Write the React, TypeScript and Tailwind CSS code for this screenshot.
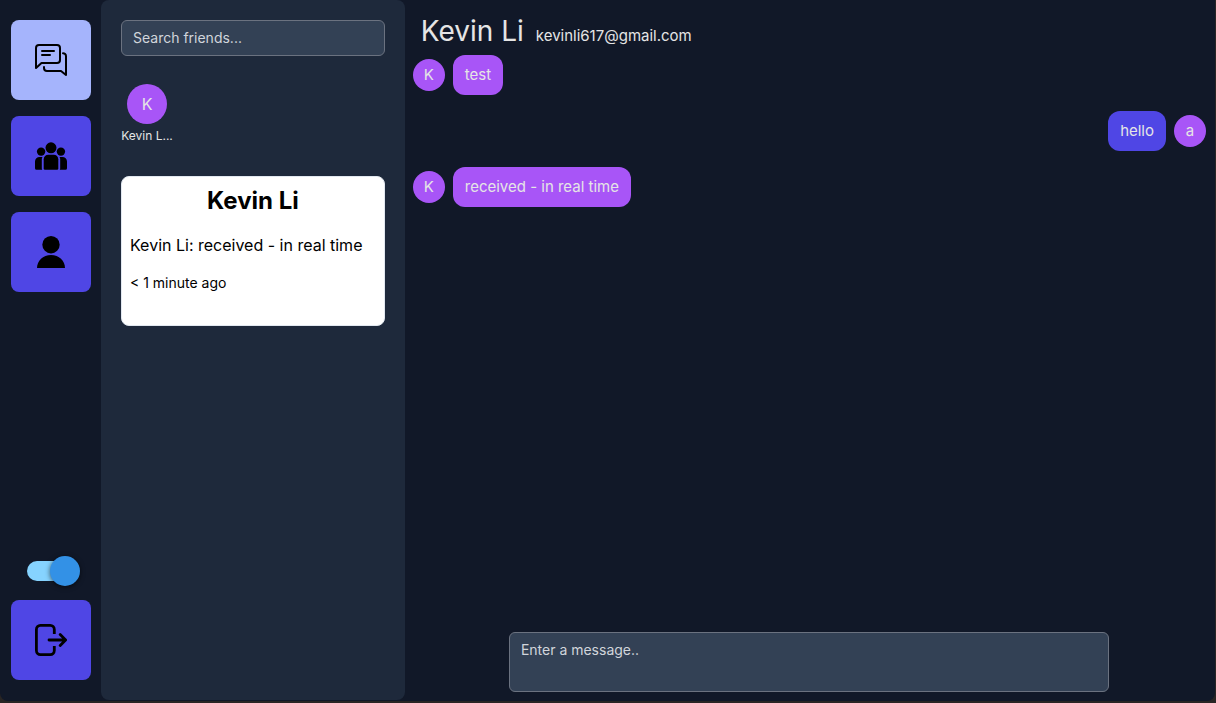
import { useState } from "react";
import type { ReactNode } from "react";

type Message = { id: number; from: string; text: string; mine: boolean };

const messages: Message[] = [
  { id: 1, from: "K", text: "test", mine: false },
  { id: 2, from: "a", text: "hello", mine: true },
  { id: 3, from: "K", text: "received - in real time", mine: false },
];

function ChatIcon() {
  return (
    <svg viewBox="0 0 32 32" className="size-8" fill="none" stroke="currentColor" strokeWidth="2" strokeLinecap="round" strokeLinejoin="round" aria-hidden="true">
      <path d="M1 24V4a3 3 0 0 1 3-3h18a3 3 0 0 1 3 3v12a3 3 0 0 1-3 3H6.5z" />
      <path d="M7 7h12M7 11h8" />
      <path d="M28 9.2a3 3 0 0 1 3 3V31l-5-4H12a3 3 0 0 1-3-3v-1" />
    </svg>
  );
}

function GroupIcon() {
  return (
    <svg viewBox="0 0 32 32" className="size-8" fill="currentColor" aria-hidden="true">
      <circle cx="16" cy="7.8" r="5.5" />
      <circle cx="6.1" cy="11.6" r="4.2" />
      <circle cx="25.9" cy="11.6" r="4.2" />
      <path d="M8.7 19.2a4.5 4.5 0 0 1 4.5-4.5h5.6a4.5 4.5 0 0 1 4.5 4.5v9.3a1.3 1.3 0 0 1-1.3 1.3H10a1.3 1.3 0 0 1-1.3-1.3z" />
      <path d="M7.5 17H4.6A4.6 4.6 0 0 0 0 21.6v6.6a1.6 1.6 0 0 0 1.6 1.6h5.6q-.4-.7-.4-1.6v-9q0-1.2.7-2.2z" />
      <path d="M24.5 17h2.9a4.6 4.6 0 0 1 4.6 4.6v6.6a1.6 1.6 0 0 1-1.6 1.6h-5.6q.4-.7.4-1.6v-9q0-1.2-.7-2.2z" />
    </svg>
  );
}

function PersonIcon() {
  return (
    <svg viewBox="0 0 32 32" className="size-8" fill="currentColor" aria-hidden="true">
      <circle cx="16" cy="8.7" r="8.7" />
      <path d="M2 32C2 24.5 8 18.9 16 18.9S30 24.5 30 32z" />
    </svg>
  );
}

function LogoutIcon() {
  return (
    <svg viewBox="0 0 32 32" className="size-8" fill="none" stroke="currentColor" strokeWidth="2.8" strokeLinejoin="round" aria-hidden="true">
      <path d="M19.3 10V5.4a4 4 0 0 0-4-4H5.4a4 4 0 0 0-4 4v21.2a4 4 0 0 0 4 4h9.9a4 4 0 0 0 4-4V22" />
      <path d="M14 16h16.5M25.2 10.5 30.6 16l-5.4 5.5" strokeLinecap="round" />
    </svg>
  );
}

function NavButton({ label, active, children }: { label: string; active?: boolean; children: ReactNode }) {
  return (
    <button
      type="button"
      aria-label={label}
      className={`flex size-20 items-center justify-center rounded-lg text-black ${active ? "bg-[#a5b4fc]" : "bg-[#4f46e5]"}`}
    >
      {children}
    </button>
  );
}

function ThemeSwitch() {
  const [on, setOn] = useState(true);
  return (
    <label className="relative mb-3.5 ml-4 flex h-[30px] w-[50px] cursor-pointer items-center">
      <input
        type="checkbox"
        aria-label="Dark mode"
        checked={on}
        onChange={(e) => setOn(e.target.checked)}
        className="peer sr-only"
      />
      <span className="h-5 w-full rounded-full bg-slate-500 peer-checked:bg-[#86d3ff]" />
      <span className="absolute top-0 left-0 size-[30px] rounded-full bg-[#3391e6] shadow-[0_1px_5px_rgba(0,0,0,0.6)] peer-checked:left-[23px]" />
    </label>
  );
}

function MessageRow({ message }: { message: Message }) {
  return (
    <li className={`flex items-center gap-2 ${message.mine ? "flex-row-reverse" : ""}`}>
      <span className="flex size-8 shrink-0 items-center justify-center rounded-full bg-[#a855f7]">{message.from}</span>
      <p className={`rounded-xl px-3 py-2 ${message.mine ? "bg-[#4f46e5]" : "bg-[#a855f7]"}`}>{message.text}</p>
    </li>
  );
}

export default function App() {
  return (
    <div className="flex h-screen bg-[#292524] pr-px pb-0.5 font-['Inter',sans-serif] text-base text-[#e5e5e5]">
      <div className="flex min-w-0 flex-1 rounded-b-lg bg-[#111828]">
        <nav className="flex shrink-0 flex-col gap-4 pt-5 pr-2.5 pb-[21px] pl-[11px]">
          <NavButton label="Chats" active>
            <ChatIcon />
          </NavButton>
          <NavButton label="Friends">
            <GroupIcon />
          </NavButton>
          <NavButton label="Profile">
            <PersonIcon />
          </NavButton>
          <div className="mt-auto">
            <ThemeSwitch />
            <NavButton label="Log out">
              <LogoutIcon />
            </NavButton>
          </div>
        </nav>

        <aside className="mb-px flex w-1/4 shrink-0 flex-col rounded-lg bg-[#1e293b] p-5">
          <input
            type="search"
            aria-label="Search friends"
            placeholder="Search friends..."
            className="h-9 w-full rounded-md border border-[#6b7280] bg-[#334155] px-[11px] pb-0.5 text-sm placeholder:text-[#d1d5db]"
          />
          <a href="#kevin" className="mt-7 flex w-[52px] flex-col items-center gap-1">
            <span className="flex size-10 items-center justify-center rounded-full bg-[#a855f7]">K</span>
            <span className="text-xs whitespace-nowrap">Kevin L...</span>
          </a>
          <a href="#kevin" className="mt-8 flex h-[150px] flex-col rounded-lg border border-[#e2e8f0] bg-white px-2 py-2 text-black">
            <h2 className="text-center text-2xl/8 font-bold">Kevin Li</h2>
            <p className="mt-4">Kevin Li: received - in real time</p>
            <p className="mt-4 text-sm">&lt; 1 minute ago</p>
          </a>
        </aside>

        <main className="flex min-w-0 flex-1 flex-col pr-0.5">
          <header className="flex items-baseline gap-3 px-4 pt-[13px] pb-1.5">
            <h1 className="text-[28px]/9">Kevin Li</h1>
            <p className="text-[15px]/6">kevinli617@gmail.com</p>
          </header>
          <ul className="flex flex-1 flex-col gap-4 overflow-y-auto pr-[7px] pl-2 text-[15px]/6">
            {messages.map((m) => (
              <MessageRow key={m.id} message={m} />
            ))}
          </ul>
          <textarea
            aria-label="Message"
            placeholder="Enter a message.."
            className="mx-auto mb-[9px] h-[60px] w-full max-w-[600px] resize-none rounded-md border border-[#6b7280] bg-[#334155] px-[11px] py-[7px] text-sm placeholder:text-[#d1d5db]"
          />
        </main>
      </div>
    </div>
  );
}
